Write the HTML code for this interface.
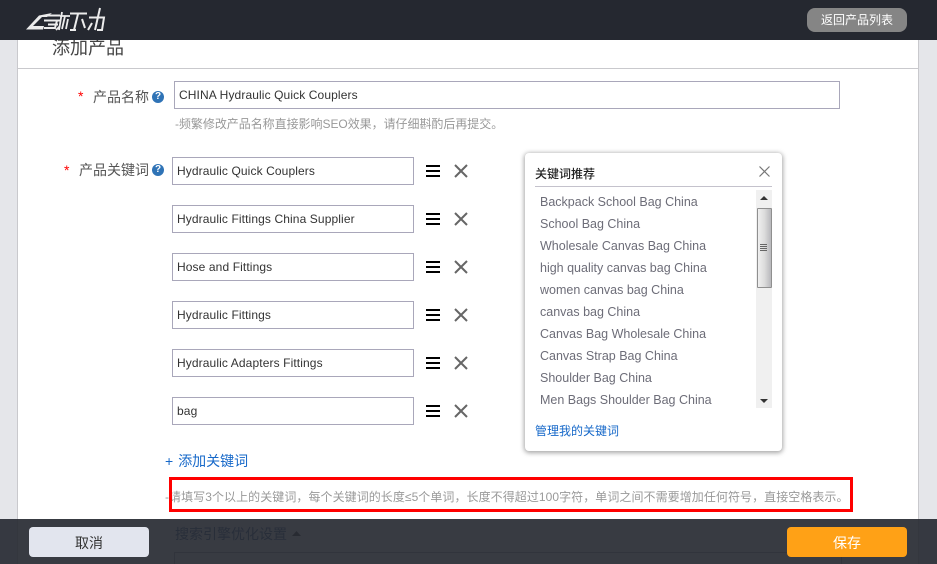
<!DOCTYPE html>
<html lang="zh"><head><meta charset="utf-8"><title>添加产品</title>
<style>
html,body{margin:0;padding:0;overflow:hidden;width:937px;height:564px}
body{position:relative;background:#e5e6ea;font-family:"Liberation Sans","Noto Sans CJK SC",sans-serif;font-size:12px;color:#333}
.a{position:absolute;white-space:nowrap}
#card{position:absolute;left:17px;top:0;width:900px;height:564px;background:#fff;border-left:1px solid #c9c9cd;border-right:1px solid #c9c9cd}
#top{position:absolute;left:0;top:0;width:937px;height:40px;background:#252830}
#back{position:absolute;left:807px;top:8px;width:100px;height:24px;border-radius:8px;background:#858585;color:#fff;text-align:center;line-height:24px;font-size:12px}
.inp{position:absolute;box-sizing:border-box;background:#fff;border:1px solid #a9a7ba;line-height:27px;padding-left:4px;color:#333;font-size:12px;letter-spacing:.11px;white-space:nowrap}
.kw{left:172px;width:242px;height:28px}
.bars{position:absolute;left:426px;width:14px;height:13px}
.bars i{display:block;height:2.4px;background:#000;margin-bottom:2.6px}
.x{position:absolute;left:454px;width:14px;height:14px}
.lab{font-size:14px;color:#555;line-height:20px}
.q{position:absolute;width:12px;height:12px;border-radius:50%;background:#2f73b6;color:#fff;font:bold 10px/12px "Liberation Sans",sans-serif;text-align:center}
.star{color:#f00;font-size:14px}
#pop{position:absolute;left:525px;top:153px;width:257px;height:298px;background:#fff;border-radius:4px;box-shadow:0 1px 5px 1px rgba(0,0,0,.35)}
.it{position:absolute;left:15px;font-size:12.5px;color:#6d6d78;white-space:nowrap;line-height:18px}
#sb{position:absolute;left:231px;top:37px;width:16px;height:218px;background:#f0f0f0}
#th{position:absolute;left:1px;top:18px;width:13px;height:78px;border:1px solid #8f8f8f;border-radius:1px;background:linear-gradient(90deg,#efefef,#dcdcdc 50%,#b8b8bc)}
#bot{position:absolute;left:0;top:519px;width:937px;height:45px;background:rgba(37,40,48,.913)}
</style></head><body>
<div id="card"></div>
<div class="a" style="left:18px;top:68px;width:900px;height:1px;background:#c9c9cd"></div>
<div class="a" style="left:52px;top:35px;font-size:18px;color:#444;line-height:26px">添加产品</div>

<div class="a star" style="left:78px;top:88px">*</div>
<div class="a lab" style="left:93px;top:87px">产品名称</div>
<div class="q" style="left:152px;top:91px">?</div>
<div class="inp" style="left:174px;top:81px;width:666px;height:28px">CHINA Hydraulic Quick Couplers</div>
<div class="a" style="left:175px;top:115px;color:#999;font-size:12px;letter-spacing:-.04px">-频繁修改产品名称直接影响SEO效果，请仔细斟酌后再提交。</div>

<div class="a star" style="left:64px;top:162px">*</div>
<div class="a lab" style="left:79px;top:160px">产品关键词</div>
<div class="q" style="left:152px;top:164px">?</div>

<div class="inp kw" style="top:157px">Hydraulic Quick Couplers</div>
<div class="inp kw" style="top:205px">Hydraulic Fittings China Supplier</div>
<div class="inp kw" style="top:253px">Hose and Fittings</div>
<div class="inp kw" style="top:301px">Hydraulic Fittings</div>
<div class="inp kw" style="top:349px">Hydraulic Adapters Fittings</div>
<div class="inp kw" style="top:397px">bag</div>

<div class="bars" style="top:165px"><i></i><i></i><i></i></div>
<div class="bars" style="top:213px"><i></i><i></i><i></i></div>
<div class="bars" style="top:261px"><i></i><i></i><i></i></div>
<div class="bars" style="top:309px"><i></i><i></i><i></i></div>
<div class="bars" style="top:357px"><i></i><i></i><i></i></div>
<div class="bars" style="top:405px"><i></i><i></i><i></i></div>

<svg class="x" style="top:164px" viewBox="0 0 14 14"><path d="M1 1L13 13M13 1L1 13" stroke="#666" stroke-width="2" fill="none"/></svg>
<svg class="x" style="top:212px" viewBox="0 0 14 14"><path d="M1 1L13 13M13 1L1 13" stroke="#666" stroke-width="2" fill="none"/></svg>
<svg class="x" style="top:260px" viewBox="0 0 14 14"><path d="M1 1L13 13M13 1L1 13" stroke="#666" stroke-width="2" fill="none"/></svg>
<svg class="x" style="top:308px" viewBox="0 0 14 14"><path d="M1 1L13 13M13 1L1 13" stroke="#666" stroke-width="2" fill="none"/></svg>
<svg class="x" style="top:356px" viewBox="0 0 14 14"><path d="M1 1L13 13M13 1L1 13" stroke="#666" stroke-width="2" fill="none"/></svg>
<svg class="x" style="top:404px" viewBox="0 0 14 14"><path d="M1 1L13 13M13 1L1 13" stroke="#666" stroke-width="2" fill="none"/></svg>

<div id="pop">
  <div class="a" style="left:10px;top:12px;font-size:12px;color:#222;font-weight:500">关键词推荐</div>
  <svg class="a" style="left:234px;top:13px" width="11" height="11" viewBox="0 0 11 11"><path d="M.5.5L10.5 10.5M10.5.5L.5 10.5" stroke="#777" stroke-width="1.2" fill="none"/></svg>
  <div class="a" style="left:10px;top:33px;width:237px;height:1px;background:#c4c2cc"></div>
  <div class="it" style="top:40px">Backpack School Bag China</div>
  <div class="it" style="top:62px">School Bag China</div>
  <div class="it" style="top:84px">Wholesale Canvas Bag China</div>
  <div class="it" style="top:106px">high quality canvas bag China</div>
  <div class="it" style="top:128px">women canvas bag China</div>
  <div class="it" style="top:150px">canvas bag China</div>
  <div class="it" style="top:172px">Canvas Bag Wholesale China</div>
  <div class="it" style="top:194px">Canvas Strap Bag China</div>
  <div class="it" style="top:216px">Shoulder Bag China</div>
  <div class="it" style="top:238px">Men Bags Shoulder Bag China</div>
  <div id="sb">
    <svg class="a" style="left:4px;top:6px" width="8" height="5"><path d="M4 0L8 4H0Z" fill="#333"/></svg>
    <div id="th"></div>
    <div class="a" style="left:4px;top:54px;width:7px;height:1px;background:#666;box-shadow:0 2px 0 #666,0 4px 0 #666,0 6px 0 #666"></div>
    <svg class="a" style="left:4px;top:208px" width="8" height="5"><path d="M0 1H8L4 5Z" fill="#333"/></svg>
  </div>
  <div class="a" style="left:10px;top:269px;font-size:12px;color:#1668c9">管理我的关键词</div>
</div>

<div class="a" style="left:165px;top:452px;font-size:14px;color:#1668c9;line-height:18px">+<span style="margin-left:5px">添加关键词</span></div>
<div class="a" style="left:165px;top:488px;font-size:12px;color:#999;letter-spacing:.06px">-请填写3个以上的关键词，每个关键词的长度≤5个单词，长度不得超过100字符，单词之间不需要增加任何符号，直接空格表示。</div>
<div class="a" style="left:169px;top:477px;width:684px;height:35px;box-sizing:border-box;border:3px solid #f00"></div>

<div class="a" style="left:175px;top:524px;font-size:14px;color:#4a6a9a">搜索引擎优化设置</div>
<svg class="a" style="left:292px;top:531px" width="9" height="5"><path d="M4.5 0L9 5H0Z" fill="#4d4d4d"/></svg>
<div class="a" style="left:174px;top:552px;width:666px;height:20px;border:1px solid #a9a7ba"></div>

<div id="bot"></div>
<div class="a" style="left:29px;top:527px;width:120px;height:30px;border-radius:4px;background:#e2e5ee;color:#333;text-align:center;line-height:32px;font-size:14px">取消</div>
<div class="a" style="left:787px;top:527px;width:120px;height:30px;border-radius:4px;background:#ffa116;color:#fff;text-align:center;line-height:32px;font-size:14px">保存</div>

<div id="top"></div>
<svg class="a" style="left:0;top:0" width="120" height="40" viewBox="0 0 120 40">
  <path d="M26 29.5L39 15.5L52 13L47 17H42L33 26H44L43 29.5Z" fill="#ececec"/>
  <path d="M47 15.5H60M44 20.5H60M57 20.5L55 28H44M48 24.5H58" stroke="#ececec" stroke-width="2" fill="none"/>
  <path d="M62 12L59 30M60 16H70M65 16L62 29M68 19L66 29M56 30L60 26" stroke="#ececec" stroke-width="1.8" fill="none"/>
  <path d="M70 13.5H87M78 14L74 30M70 30H76M82 19L85 28" stroke="#ececec" stroke-width="2" fill="none"/>
  <path d="M100 8L95 30M89 17.5H104L102 30H97M88 30L92 23" stroke="#ececec" stroke-width="2" fill="none"/>
</svg>
<div id="back">返回产品列表</div>
</body></html>
